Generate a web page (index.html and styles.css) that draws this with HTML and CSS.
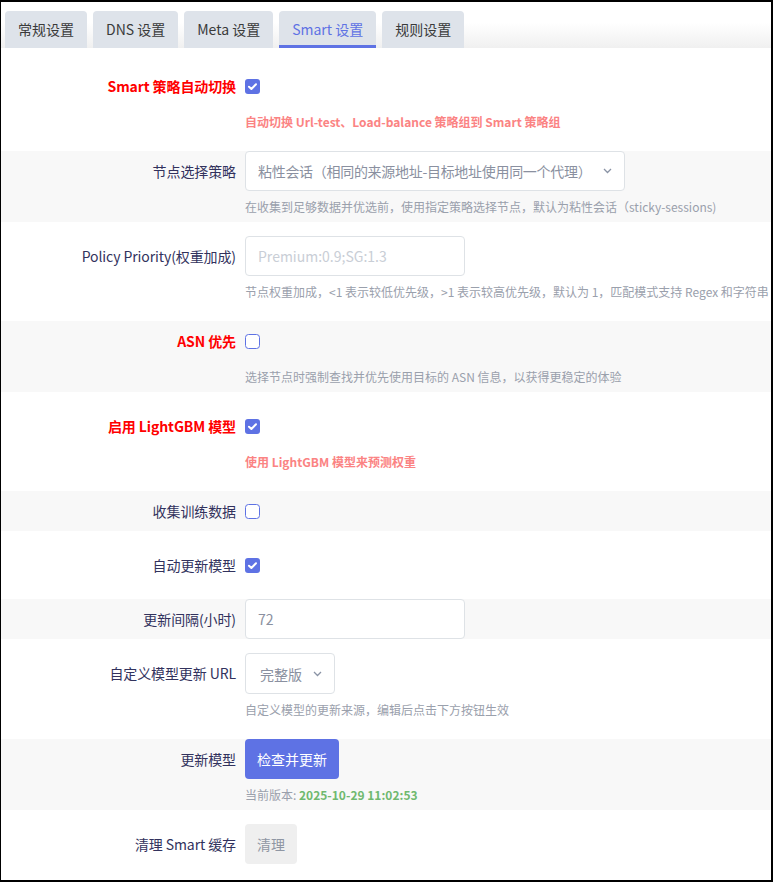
FILE: index.html
```html
<!DOCTYPE html>
<html lang="zh-CN">
<head>
  <meta charset="UTF-8">
  <title>Smart 设置</title>
  <link rel="stylesheet" href="styles.css">
</head>
<body>
<div class="frame">
  <ul class="tabs">
    <li>常规设置</li>
    <li>DNS 设置</li>
    <li>Meta 设置</li>
    <li class="active">Smart 设置</li>
    <li>规则设置</li>
  </ul>

  <div class="section">
    <div class="row">
      <div class="key warn">Smart 策略自动切换</div>
      <div class="val">
        <div class="line"><svg class="check" viewBox="0 0 15 15"><rect width="15" height="15" rx="3" fill="#5e72e4"/><path d="M4 7.7 L6.4 10 L11 5.2" stroke="#fff" stroke-width="2" fill="none" stroke-linecap="round" stroke-linejoin="round"/></svg></div>
        <div class="desc hot">自动切换 Url-test、Load-balance 策略组到 Smart 策略组</div>
      </div>
    </div>

    <div class="row alt">
      <div class="key">节点选择策略</div>
      <div class="val">
        <div class="line"><div class="select wide"><span>粘性会话（相同的来源地址-目标地址使用同一个代理）</span><svg class="chev" viewBox="0 0 9 6"><path d="M1 1 L4.5 4.5 L8 1" stroke="#8a93a5" stroke-width="1.3" fill="none"/></svg></div></div>
        <div class="desc">在收集到足够数据并优选前，使用指定策略选择节点，默认为粘性会话（sticky-sessions)</div>
      </div>
    </div>

    <div class="row">
      <div class="key">Policy Priority(权重加成)</div>
      <div class="val">
        <div class="line"><div class="input placeholder">Premium:0.9;SG:1.3</div></div>
        <div class="desc">节点权重加成，&lt;1 表示较低优先级，&gt;1 表示较高优先级，默认为 1，匹配模式支持 Regex 和字符串</div>
      </div>
    </div>

    <div class="row alt">
      <div class="key warn">ASN 优先</div>
      <div class="val">
        <div class="line"><svg class="check" viewBox="0 0 15 15"><rect x="0.5" y="0.5" width="14" height="14" rx="3" fill="#fff" stroke="#5e72e4"/></svg></div>
        <div class="desc">选择节点时强制查找并优先使用目标的 ASN 信息，以获得更稳定的体验</div>
      </div>
    </div>

    <div class="row">
      <div class="key warn">启用 LightGBM 模型</div>
      <div class="val">
        <div class="line"><svg class="check" viewBox="0 0 15 15"><rect width="15" height="15" rx="3" fill="#5e72e4"/><path d="M4 7.7 L6.4 10 L11 5.2" stroke="#fff" stroke-width="2" fill="none" stroke-linecap="round" stroke-linejoin="round"/></svg></div>
        <div class="desc hot">使用 LightGBM 模型来预测权重</div>
      </div>
    </div>

    <div class="row alt">
      <div class="key">收集训练数据</div>
      <div class="val">
        <div class="line"><svg class="check" viewBox="0 0 15 15"><rect x="0.5" y="0.5" width="14" height="14" rx="3" fill="#fff" stroke="#5e72e4"/></svg></div>
      </div>
    </div>

    <div class="row">
      <div class="key">自动更新模型</div>
      <div class="val">
        <div class="line"><svg class="check" viewBox="0 0 15 15"><rect width="15" height="15" rx="3" fill="#5e72e4"/><path d="M4 7.7 L6.4 10 L11 5.2" stroke="#fff" stroke-width="2" fill="none" stroke-linecap="round" stroke-linejoin="round"/></svg></div>
      </div>
    </div>

    <div class="row alt">
      <div class="key">更新间隔(小时)</div>
      <div class="val">
        <div class="line"><div class="input">72</div></div>
      </div>
    </div>

    <div class="row">
      <div class="key">自定义模型更新 URL</div>
      <div class="val">
        <div class="line tall"><div class="select small"><span>完整版</span><svg class="chev" viewBox="0 0 9 6"><path d="M1 1 L4.5 4.5 L8 1" stroke="#8a93a5" stroke-width="1.3" fill="none"/></svg></div></div>
        <div class="desc">自定义模型的更新来源，编辑后点击下方按钮生效</div>
      </div>
    </div>

    <div class="row alt">
      <div class="key">更新模型</div>
      <div class="val">
        <div class="line"><button class="btn primary">检查并更新</button></div>
        <div class="desc">当前版本: <b class="ok">2025-10-29 11:02:53</b></div>
      </div>
    </div>

    <div class="row">
      <div class="key">清理 Smart 缓存</div>
      <div class="val">
        <div class="line"><button class="btn plain">清理</button></div>
      </div>
    </div>
  </div>
</div>
</body>
</html>
```

FILE: styles.css
```css
html, body {
  margin: 0;
  padding: 0;
  background: #fff;
}
body {
  font-family: "Noto Sans CJK SC", "Noto Sans", sans-serif;
  color: #32325d;
  font-size: 14px;
}
.frame {
  height: 882px;
  box-sizing: border-box;
  border: 2px solid #000;
  border-left-width: 1px;
  overflow: hidden;
}
.tabs {
  list-style: none;
  margin: 0;
  padding: 9px 0 0 4px;
  display: flex;
  gap: 6px;
  background: linear-gradient(180deg, #fff 45%, #f0f0f0 100%);
}
.tabs li {
  height: 37px;
  line-height: 37px;
  padding: 0 13px;
  background: #dee3ea;
  border-radius: 4px 4px 0 0;
  color: #3a3a3a;
}
.tabs li.active {
  color: #5e72e4;
  box-shadow: inset 0 -3px 0 #5e72e4;
}
.section {
  padding-top: 4px;
}
.row {
  display: flex;
  padding: 14px 0;
  background: #fff;
}
.row.alt {
  padding: 0;
  background: #f8f8f8;
}
.key {
  width: 244px;
  flex: none;
  box-sizing: border-box;
  padding-right: 9px;
  text-align: right;
  line-height: 40px;
  white-space: nowrap;
  letter-spacing: -0.1px;
}
.key.warn {
  color: #ff0000;
  font-weight: 700;
}
.val {
  flex: 1;
  min-width: 0;
}
.line {
  height: 40px;
  display: flex;
  align-items: center;
}
.line.tall {
  height: 41px;
}
.check {
  width: 15px;
  height: 15px;
  display: block;
}
.desc {
  font-size: 12px;
  line-height: 18px;
  padding: 7px 0 6px;
  color: #9aa0ac;
  white-space: nowrap;
}
.desc.hot {
  color: #fb8383;
  font-weight: 700;
}
.ok {
  color: #6fb96f;
}
.select {
  display: inline-flex;
  align-items: center;
  gap: 12px;
  height: 40px;
  box-sizing: border-box;
  padding: 0 14px 0 12px;
  border: 1px solid #dee2e6;
  border-radius: 4px;
  background: #fff;
  color: #8a90a0;
  white-space: nowrap;
}
.select.wide {
  width: 380px;
  justify-content: space-between;
  letter-spacing: -0.3px;
}
.select.small {
  height: 41px;
  padding: 0 12px 0 14px;
  gap: 11px;
}
.chev {
  width: 9px;
  height: 6px;
  display: block;
  flex: none;
}
.input {
  width: 220px;
  height: 40px;
  line-height: 38px;
  box-sizing: border-box;
  padding-left: 12px;
  border: 1px solid #dee2e6;
  border-radius: 4px;
  background: #fff;
  color: #8a90a0;
}
.input.placeholder {
  color: #c9ced6;
}
.btn {
  height: 40px;
  padding: 0 12px;
  border: none;
  border-radius: 4px;
  font-family: inherit;
  font-size: 14px;
}
.btn.primary {
  background: #5e72e4;
  color: #fff;
}
.btn.plain {
  background: #efefef;
  color: #8f96a3;
}
```
